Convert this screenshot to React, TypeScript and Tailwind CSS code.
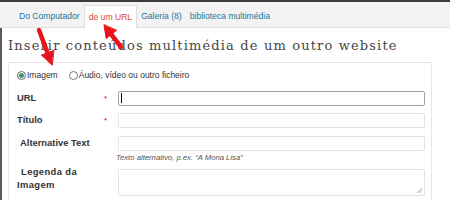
import React from 'react';

const tabs = [
    { label: 'Do Computador', active: false },
    { label: 'de um URL', active: true },
    { label: 'Galeria (8)', active: false },
    { label: 'biblioteca multimédia', active: false },
];

const Arrows: React.FC = () => (
    <svg className="pointer-events-none absolute left-0 top-0" width="450" height="201" viewBox="0 0 450 201">
        <g fill="#e8141b" stroke="#e8141b" strokeLinecap="round">
            <line x1="39" y1="30" x2="47.5" y2="52.8" strokeWidth="4.5" />
            <polygon points="53.6,50.5 41.4,55.1 52,65" strokeWidth="1" strokeLinejoin="round" />
            <line x1="121" y1="47" x2="111.3" y2="34.5" strokeWidth="4.5" />
            <polygon points="116.4,30.5 106.2,38.5 104,25" strokeWidth="1" strokeLinejoin="round" />
        </g>
    </svg>
);

const Required = () => <span className="w-[14px] pt-[1px] text-[8px] leading-none text-[#d00]">*</span>;

export default function App() {
    return (
        <div className="relative h-[201px] w-[450px] overflow-hidden bg-white font-['Liberation_Sans',Arial,sans-serif]">
            {/* tab bar */}
            <div className="flex h-[28px] items-end border-t-2 border-b border-t-[#3c3c3c] border-b-[#dfdfdf] bg-[#f3f3f3] pl-[15px]">
                {tabs.map((tab) =>
                    tab.active ? (
                        <div
                            key={tab.label}
                            className="-mb-px flex h-[23px] items-center border border-b-0 border-[#dfdfdf] bg-white px-[4px] text-[8.6px] text-[#d54e21]"
                        >
                            {tab.label}
                        </div>
                    ) : (
                        <div key={tab.label} className="flex h-[22px] items-center px-[4px] text-[8.6px] text-[#21759b]">
                            {tab.label}
                        </div>
                    )
                )}
            </div>

            <div className="h-[172px] border-l-2 border-l-[#5a5a5a] pl-[6px]">
                <h3 className="pt-[8px] pb-[6px] font-['DejaVu_Serif',Georgia,serif] text-[13px] leading-[20px] tracking-[1.15px] text-[#464646]">
                    Inserir conteúdos multimédia de um outro website
                </h3>

                <div className="mr-[18px] h-[200px] border border-[#e6e6e6] pl-[8px] pr-[6px]">
                    {/* media type */}
                    <div className="flex h-[24px] items-center text-[8.5px] text-[#333]">
                        <label className="flex items-center">
                            <span className="mr-[1px] flex h-[9px] w-[9px] items-center justify-center rounded-full border border-[#666]">
                                <span className="h-[5px] w-[5px] rounded-full bg-[#3a9a6a]" />
                            </span>
                            Imagem
                        </label>
                        <label className="ml-[11px] flex items-center">
                            <span className="mr-[1px] h-[9px] w-[9px] rounded-full border border-[#777]" />
                            Áudio, vídeo ou outro ficheiro
                        </label>
                    </div>

                    <div className="mt-[3px] flex h-[16px] items-center">
                        <span className="w-[87px] text-[9.4px] font-bold text-[#333]">URL</span>
                        <Required />
                        <div className="flex h-[15px] flex-1 items-center rounded-[2px] border border-[#a0a0a0] bg-white pl-[2px]">
                            <span className="h-[10px] w-px bg-black" />
                        </div>
                    </div>

                    <div className="mt-[7px] flex h-[15px] items-center">
                        <span className="w-[87px] text-[9.4px] font-bold text-[#333]">Título</span>
                        <Required />
                        <div className="h-[15px] flex-1 rounded-[2px] border border-[#e3e3e3] bg-white" />
                    </div>

                    <div className="mt-[8px] flex h-[15px] items-center">
                        <span className="w-[101px] pl-[3px] text-[9.4px] font-bold text-[#333]">Alternative Text</span>
                        <div className="h-[15px] flex-1 rounded-[2px] border border-[#e3e3e3] bg-white" />
                    </div>
                    <p className="ml-[99px] mt-[1px] text-[7.7px] italic leading-[12px] text-[#555]">
                        Texto alternativo, p.ex. “A Mona Lisa”
                    </p>

                    <div className="mt-[1px] flex">
                        <span className="w-[101px] text-[9.4px] font-bold leading-[13px] tracking-[0.4px] text-[#333]">
                            <span className="pl-[4px]">Legenda da</span>
                            <br />
                            Imagem
                        </span>
                        <div className="relative mt-[4px] h-[27px] flex-1 rounded-[2px] border border-[#e3e3e3] bg-white">
                            <svg className="absolute bottom-[1px] right-[1px]" width="7" height="7" viewBox="0 0 7 7">
                                <path d="M6 1L1 6M6 3.5L3.5 6" stroke="#999" strokeWidth="0.8" />
                            </svg>
                        </div>
                    </div>
                </div>
            </div>

            <Arrows />
        </div>
    );
}
